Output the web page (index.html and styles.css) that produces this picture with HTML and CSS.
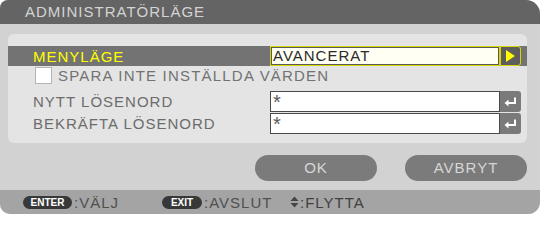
FILE: index.html
```html
<!DOCTYPE html>
<html>
<head>
<meta charset="utf-8">
<link rel="stylesheet" href="styles.css">
</head>
<body>
<div class="window">
  <div class="titlebar">ADMINISTRATÖRLÄGE</div>
  <div class="content">
    <div class="panel">
      <div class="row sel">
        <div class="label">MENYLÄGE</div>
        <div class="field field-sel">AVANCERAT</div>
        <div class="btn btn-arrow">
          <svg width="11" height="12" viewBox="0 0 11 12"><polygon points="1,0 10,6 1,12" fill="#ffff00"/></svg>
        </div>
      </div>
      <div class="row check-row">
        <div class="checkbox"></div>
        <div class="check-label">SPARA INTE INSTÄLLDA VÄRDEN</div>
      </div>
      <div class="row input-row">
        <div class="label">NYTT LÖSENORD</div>
        <div class="field field-pw">*</div>
        <div class="btn btn-enter">
          <svg width="13" height="10" viewBox="0 0 13 10"><path d="M11 0.5 V6 H3" stroke="#fff" stroke-width="2" fill="none"/><polygon points="0.5,6 4.5,2.5 4.5,9.5" fill="#fff"/></svg>
        </div>
      </div>
      <div class="row input-row">
        <div class="label">BEKRÄFTA LÖSENORD</div>
        <div class="field field-pw">*</div>
        <div class="btn btn-enter">
          <svg width="13" height="10" viewBox="0 0 13 10"><path d="M11 0.5 V6 H3" stroke="#fff" stroke-width="2" fill="none"/><polygon points="0.5,6 4.5,2.5 4.5,9.5" fill="#fff"/></svg>
        </div>
      </div>
    </div>
    <div class="actions">
      <div class="pill">OK</div>
      <div class="pill">AVBRYT</div>
    </div>
  </div>
  <div class="footer">
    <div class="hint hint-enter"><span class="key key-enter">ENTER</span><span class="hint-text">:VÄLJ</span></div>
    <div class="hint hint-exit"><span class="key key-exit">EXIT</span><span class="hint-text">:AVSLUT</span></div>
    <div class="hint"><svg class="updown" width="9" height="12" viewBox="0 0 9 12"><polygon points="0.5,5 4.5,0.5 8.5,5" fill="#454545"/><polygon points="0.5,7 4.5,11.5 8.5,7" fill="#454545"/></svg><span class="hint-text dark">:FLYTTA</span></div>
  </div>
</div>
</body>
</html>
```

FILE: styles.css
```css
html, body {
  margin: 0;
  padding: 0;
  background: #ffffff;
}

body {
  font-family: "Liberation Sans", Arial, sans-serif;
  font-size: 15px;
}

.window {
  width: 540px;
  height: 214px;
  background: #d2d2d2;
  border-radius: 8px 14px 12px 10px;
  overflow: hidden;
  display: flex;
  flex-direction: column;
}

.titlebar {
  height: 24px;
  line-height: 24px;
  background: #646464;
  color: #d4d4d4;
  padding-left: 25px;
  letter-spacing: 1px;
  font-size: 15px;
}

.content {
  flex: 1;
  padding: 10px 13px 0 8px;
  display: flex;
  flex-direction: column;
}

.panel {
  height: 109px;
  box-sizing: border-box;
  background: #e4e4e4;
  border-radius: 6px;
  padding-top: 12px;
  display: flex;
  flex-direction: column;
}

.row {
  display: flex;
  align-items: center;
}

.label {
  width: 262px;
  box-sizing: border-box;
  padding-left: 25px;
  color: #6c6c6c;
  letter-spacing: 1px;
}

.sel {
  height: 20px;
  background: #737373;
}

.sel .label {
  color: #ffff00;
}

.field {
  width: 230px;
  height: 21px;
  box-sizing: border-box;
  background: #ffffff;
  border: 1px solid #4a4a4a;
  padding-left: 3px;
  line-height: 20px;
  color: #555555;
  letter-spacing: 1px;
}

.field-pw {
  font-size: 20px;
  line-height: 21px;
  color: #5a5a5a;
  padding-left: 2px;
}

.field-sel {
  height: 20px;
  line-height: 18px;
  border: 1px solid #d8d800;
  outline: 1px solid #5a5a5a;
  outline-offset: -2px;
  background: #fffff4;
  color: #2a2a2a;
  padding-left: 2px;
}

.btn {
  width: 21px;
  display: flex;
  align-items: center;
  justify-content: center;
  box-sizing: border-box;
  border-radius: 0 3px 3px 0;
}

.btn-arrow {
  height: 20px;
  background: #5e5e5e;
  border: 1px solid #d8d800;
}

.btn-enter {
  height: 21px;
  background: #7a7a7a;
}

.check-row {
  height: 25px;
  align-items: flex-start;
}

.checkbox {
  width: 17px;
  height: 17px;
  box-sizing: border-box;
  margin: 1px 0 0 27px;
  background: #ffffff;
  border: 1px solid #b4b4b4;
}

.check-label {
  margin-left: 6px;
  line-height: 19px;
  color: #727272;
  letter-spacing: 1.2px;
}

.input-row {
  height: 21px;
  margin-bottom: 1px;
}

.actions {
  margin-top: 12px;
  display: flex;
  justify-content: flex-end;
  gap: 28px;
}

.pill {
  width: 122px;
  height: 26px;
  line-height: 26px;
  border-radius: 13px;
  background: #7b7b7b;
  color: #d6d6d6;
  text-align: center;
  letter-spacing: 1px;
}

.footer {
  height: 24px;
  background: #a4a4a4;
  display: flex;
  align-items: center;
  padding-left: 23px;
}

.hint {
  display: flex;
  align-items: center;
}

.hint-enter {
  width: 139px;
}

.hint-exit {
  width: 128px;
}

.key {
  height: 13px;
  line-height: 13px;
  border-radius: 7px;
  background: #383838;
  color: #ffffff;
  font-size: 10px;
  font-weight: bold;
  text-align: center;
  box-sizing: border-box;
}

.key-enter {
  width: 49px;
}

.key-exit {
  width: 40px;
}

.hint-text {
  margin-left: 2px;
  color: #505050;
  letter-spacing: 1px;
}

.hint-text.dark {
  color: #404040;
  margin-left: 1px;
}

.updown {
  display: block;
}
```
